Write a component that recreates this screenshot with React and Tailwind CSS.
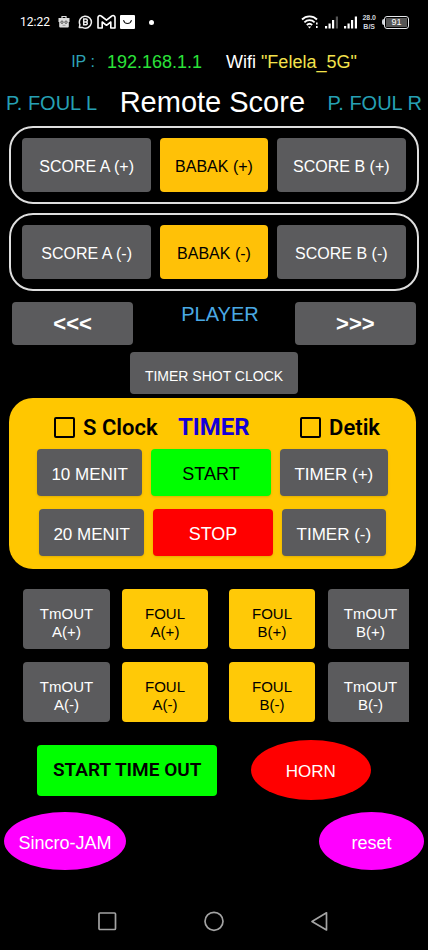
import { useState } from "react";

// Button colours shared by all the remote keys
const tones = {
  gray: "bg-[#5b5b5d] text-white",
  amber: "bg-[#ffc107] text-black",
  yellow: "bg-[#ffc907] text-black",
  green: "bg-[#00ff00] text-black",
  red: "bg-[#ff0000] text-white",
};

function Key({ tone = "gray", className = "pt-1", children }) {
  return (
    <button type="button" className={`rounded-[4px] whitespace-nowrap ${tones[tone]} ${className}`}>
      {children}
    </button>
  );
}

// StatusBar Component
function StatusBar() {
  return (
    <div className="flex h-11 items-center justify-between pl-5 pr-[19px]">
      <div className="flex items-center">
        <span className="text-[12px] leading-4 font-[Roboto]">12:22</span>
        <svg className="ml-2 h-4 w-3" viewBox="0 0 12 16" fill="none">
          <path d="M4 4V2.5h4V4" stroke="#ddd" strokeWidth="1.2" />
          <path d="M.5 4h11v4h-.7v4.5a1 1 0 0 1-1 1H2.2a1 1 0 0 1-1-1V8H.5z" fill="#ddd" />
          <circle cx="4" cy="8.2" r="1.2" stroke="#555" />
          <circle cx="8" cy="8.2" r="1.2" stroke="#555" />
          <path d="M4.5 11.3h3" stroke="#999" />
        </svg>
        <svg className="ml-2 h-4 w-[15px]" viewBox="0 0 15 16" fill="none" stroke="#eee">
          <path d="M1.3 13.6l.6-3A6 6 0 1 1 4.800 13.6z" strokeWidth="1.5" strokeLinejoin="round" />
          <path d="M5.7 5h2.2a1.4 1.4 0 0 1 0 2.9H5.7zM5.7 7.9h2.5a1.5 1.5 0 0 1 0 2.9H5.7z" strokeWidth="1.5" />
        </svg>
        <svg className="ml-1 h-4 w-[19px]" viewBox="0 0 19 16" fill="none">
          <path
            d="M1 3.5C1 1.6 3 1 4.2 2L9.5 6.2 14.8 2C16 1 18 1.6 18 3.5V14H13.8V8L9.5 11.3 5.2 8V14H1z"
            stroke="#fff"
            strokeWidth="1.6"
            strokeLinejoin="round"
          />
        </svg>
        <svg className="ml-1 h-4 w-[15px]" viewBox="0 0 15 16" fill="none">
          <rect y="1" width="15" height="14" rx="1" fill="#fff" />
          <path d="M3.7 6.5c.8 4 6.8 4 7.6 0" stroke="#111" strokeWidth="1.2" strokeLinecap="round" />
        </svg>
        <span className="ml-[14px] size-[5px] rounded-full bg-white" />
      </div>

      <div className="flex items-center">
        <svg className="h-4 w-[18px]" viewBox="0 0 18 16" fill="none" stroke="#fff">
          <path d="M1 5.5a10.500 10.500 0 0 1 15 0M3.4 8.3a7.2 7.2 0 0 1 10.2 0M5.8 11a4 4 0 0 1 5.4 0" strokeWidth="1.8" />
          <path d="M6.8 12.5h3.4L8.5 14.5z" fill="#fff" stroke="none" />
          <path d="M15.8 8.5v2M15.8 12v2" strokeWidth="1.6" />
        </svg>
        <svg className="ml-[6px] h-4 w-[14px]" viewBox="0 0 14 16">
          <path d="M0 12h2.2v2.5H0zM3.5 9.5h2.2v5H3.5zM7 6h2.2v8.5H7z" fill="#fff" />
          <path d="M10.8 2.5H13v12h-2.2z" fill="#555" />
        </svg>
        <svg className="ml-[5px] h-4 w-[14px]" viewBox="0 0 14 16">
          <path d="M0 12h2.2v2.5H0zM3.5 9.5h2.2v5H3.5zM7 6h2.2v8.5H7zM10.8 2.5H13v12h-2.2z" fill="#fff" />
        </svg>
        <span className="ml-1 text-center text-[7px] leading-[9px] font-bold text-gray-300">
          28.0
          <br />
          B/S
        </span>
        <span className="ml-[6px] flex items-center">
          <span className="h-[6px] w-[2px] rounded-l bg-gray-300" />
          <span className="flex h-[13px] w-[25px] rounded-[3px] border border-gray-200 p-px">
            <span className="w-full bg-[#555] text-center text-[9px] leading-[9px]">91</span>
          </span>
        </span>
      </div>
    </div>
  );
}

function ScoreRow({ sign }) {
  return (
    <div className="grid grid-cols-[129fr_107fr_129fr] gap-[9px] rounded-[24px] border-2 border-[#dedede] px-[11px] py-[10px] text-[16px]">
      <Key className="h-[54px] pt-1">SCORE A ({sign})</Key>
      <Key tone="amber">BABAK ({sign})</Key>
      <Key>SCORE B ({sign})</Key>
    </div>
  );
}

function Tick({ label }) {
  const [checked, setChecked] = useState(false);

  return (
    <label className="flex items-center gap-2">
      <input
        type="checkbox"
        checked={checked}
        onChange={() => setChecked(!checked)}
        className="size-[21px] appearance-none rounded-[2px] border-2 border-black checked:bg-black"
      />
      {label}
    </label>
  );
}

// TimerPanel Component
function TimerPanel() {
  return (
    <section className="ml-[9px] mr-3 mt-1 rounded-[24px] bg-[#ffc700] pb-[13px] pt-[13px] text-[17px]">
      <div className="flex h-8 items-center justify-between pl-[45px] pr-9 font-[Roboto] text-[22px] font-semibold text-black">
        <Tick label="S Clock" />
        <h2 className="mr-[30px] text-[24px] font-bold text-[#1400d8]">TIMER</h2>
        <Tick label="Detik" />
      </div>
      <div className="mx-7 mt-[6px] grid grid-cols-[105fr_119fr_108fr] gap-[9px]">
        <Key className="h-[47px] pt-1 shadow">10 MENIT</Key>
        <Key tone="green" className="pt-1 text-[18px] shadow">START</Key>
        <Key className="pt-1 shadow">TIMER (+)</Key>
      </div>
      <div className="mx-[30px] mt-[13px] grid grid-cols-[105fr_119fr_104fr] gap-[9px]">
        <Key className="h-[47px] pt-1 shadow">20 MENIT</Key>
        <Key tone="red" className="pt-1 text-[18px] shadow">STOP</Key>
        <Key className="pt-1 shadow">TIMER (-)</Key>
      </div>
    </section>
  );
}

function FoulRow({ sign }) {
  return (
    <div className="ml-[23px] mr-[19px] grid grid-cols-[99fr_86fr_21fr_86fr_13fr_81fr] text-[15px] leading-[18px]">
      <Key className="mr-3 h-[60px] pt-2">
        TmOUT<br />A({sign})
      </Key>
      <Key tone="yellow" className="pt-2">
        FOUL<br />A({sign})
      </Key>
      <Key tone="yellow" className="col-start-4 pt-2">
        FOUL<br />B({sign})
      </Key>
      <Key className="col-start-6 rounded-r-none pt-2 pl-1">
        TmOUT<br />B({sign})
      </Key>
    </div>
  );
}

// NavBar Component
function NavBar() {
  return (
    <nav className="mt-[39px] flex justify-center gap-[86px] pb-4">
      <button type="button" aria-label="Recent apps">
        <svg className="h-6 w-5" viewBox="0 0 20 24" fill="none" stroke="#a3a3a3" strokeWidth="1.7">
          <rect x="1" y="4" width="16.5" height="16.5" rx="1" />
        </svg>
      </button>
      <button type="button" aria-label="Home">
        <svg className="h-6 w-5" viewBox="0 0 20 24" fill="none" stroke="#a3a3a3" strokeWidth="1.7">
          <circle cx="10" cy="12.3" r="9" />
        </svg>
      </button>
      <button type="button" aria-label="Back">
        <svg className="h-6 w-5" viewBox="0 0 20 24" fill="none" stroke="#a3a3a3" strokeWidth="1.7" strokeLinejoin="round">
          <path d="M16.5 3.8v17.2L2 12.4z" />
        </svg>
      </button>
    </nav>
  );
}

export default function App() {
  return (
    <div className="min-h-screen bg-black font-['Liberation_Sans',sans-serif] text-white">
      <StatusBar />

      <div className="flex h-9 items-center justify-center text-[18px]">
        <span className="mr-3 text-[16px] text-[#2ea3b7]">IP :</span>
        <span className="mr-6 text-[#2be23a]">192.168.1.1</span>
        <span>
          Wifi <span className="text-[#f3e34c]">"Felela_5G"</span>
        </span>
      </div>

      <header className="flex h-[46px] items-center justify-between px-[6px] pb-px">
        <span className="text-[20px] text-[#26a0b4]">P. FOUL L</span>
        <h1 className="text-[29px]">Remote Score</h1>
        <span className="text-[20px] text-[#26a0b4]">P. FOUL R</span>
      </header>

      <div className="mx-[9px] grid gap-[9px]">
        <ScoreRow sign="+" />
        <ScoreRow sign="-" />
      </div>

      <div className="mx-3 mt-[11px] flex justify-between">
        <Key className="h-[43px] w-[30%] text-[22px] font-bold">&lt;&lt;&lt;</Key>
        <span className="pl-3 text-[20px] leading-6 text-[#4aa9e4]">PLAYER</span>
        <Key className="w-[30%] text-[22px] font-bold">&gt;&gt;&gt;</Key>
      </div>

      <div className="mt-[7px] flex justify-center">
        <Key className="h-[42px] px-[15px] pt-[6px] text-[14px]">TIMER SHOT CLOCK</Key>
      </div>

      <TimerPanel />

      <div className="mt-5 grid gap-[13px]">
        <FoulRow sign="+" />
        <FoulRow sign="-" />
      </div>

      <div className="ml-[37px] mr-[57px] mt-[18px] flex items-center justify-between">
        <Key tone="green" className="h-[51px] w-[54%] font-[Roboto] text-[19px] font-semibold">
          START TIME OUT
        </Key>
        <button type="button" className="h-[60px] w-[36%] rounded-[50%] bg-[#ff0000] pt-1 text-[17px]">
          HORN
        </button>
      </div>

      <div className="mx-1 mt-3 flex justify-between text-[18px]">
        <button type="button" className="h-[58px] w-[29%] rounded-[50%] bg-[#ff00ff] pt-1">
          Sincro-JAM
        </button>
        <button type="button" className="w-1/4 rounded-[50%] bg-[#ff00ff] pt-1">
          reset
        </button>
      </div>

      <NavBar />
    </div>
  );
}
